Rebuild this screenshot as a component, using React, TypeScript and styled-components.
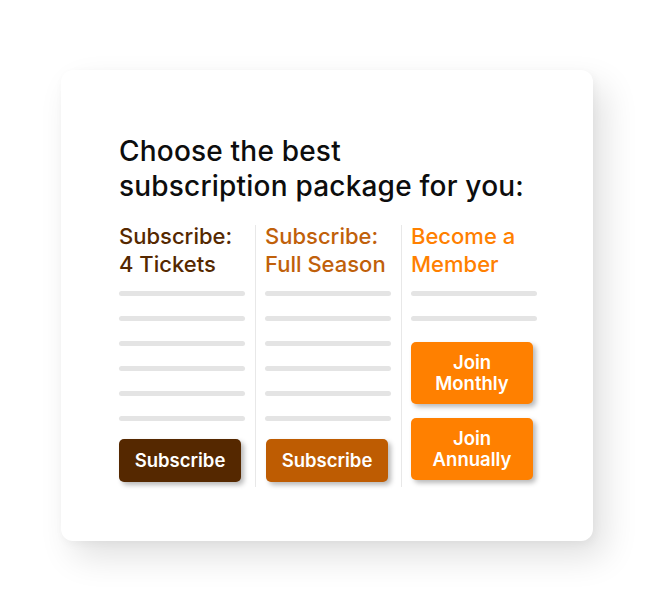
import React from "react";
import styled, { createGlobalStyle } from "styled-components";

const GlobalStyle = createGlobalStyle`
  html, body {
    margin: 0;
    padding: 0;
    background: #ffffff;
  }
  body {
    font-family: Inter, "Noto Sans", sans-serif;
    -webkit-font-smoothing: antialiased;
  }
`;

const Page = styled.div`
  width: 654px;
  height: 612px;
  padding: 70px 0 0 61px;
  box-sizing: border-box;
`;

const Card = styled.div`
  width: 532px;
  height: 471px;
  box-sizing: border-box;
  background: #ffffff;
  border-radius: 12px;
  box-shadow: 12px 16px 34px rgba(0, 0, 0, 0.12), 2px 3px 10px rgba(0, 0, 0, 0.04);
  padding: 64px 0 0 58px;
`;

const Heading = styled.h1`
  margin: 0;
  font-size: 28px;
  line-height: 35px;
  font-weight: 500;
  letter-spacing: 0.2px;
  color: #0d0d0d;
`;

const Columns = styled.div`
  display: flex;
  align-items: flex-start;
  margin-top: 17px;
`;

const Column = styled.div`
  width: 126px;
  display: flex;
  flex-direction: column;
`;

const Divider = styled.div`
  width: 1px;
  background: #e8e8e8;
  margin: 4px 9px 0 10px;
  height: 262px;
`;

const ColumnTitle = styled.h2<{ $color: string }>`
  margin: 1px 0 0;
  font-size: 22px;
  line-height: 28px;
  font-weight: 500;
  color: ${(p) => p.$color};
  white-space: nowrap;
`;

const Bars = styled.div`
  display: flex;
  flex-direction: column;
  gap: 20px;
  margin-top: 13px;
`;

const Bar = styled.div`
  height: 5px;
  border-radius: 3px;
  background: #e4e4e4;
`;

const Buttons = styled.div<{ $offset: number }>`
  display: flex;
  flex-direction: column;
  gap: 14px;
  margin-top: ${(p) => p.$offset}px;
`;

const Button = styled.button<{ $bg: string; $tall?: boolean; $inset?: number }>`
  width: 122px;
  height: ${(p) => (p.$tall ? 62 : 43)}px;
  margin-left: ${(p) => p.$inset ?? 0}px;
  border: none;
  border-radius: 5px;
  background: ${(p) => p.$bg};
  color: #ffffff;
  font-family: Inter, "Noto Sans", sans-serif;
  font-size: 18.5px;
  line-height: 21px;
  font-weight: 600;
  box-shadow: 3px 3px 5px rgba(0, 0, 0, 0.28);
  padding: 0;
  cursor: pointer;
`;

const plans = [
  { title: ["Subscribe:", "4 Tickets"], color: "#552800", bars: 6, bg: "#552800", inset: 0 },
  { title: ["Subscribe:", "Full Season"], color: "#c0600a", bars: 6, bg: "#be5c02", inset: 1 },
];

export default function App() {
  return (
    <>
      <GlobalStyle />
      <Page>
        <Card>
          <Heading>
            Choose the best
            <br />
            subscription package for you:
          </Heading>
          <Columns>
            {plans.map((plan, i) => (
              <React.Fragment key={i}>
                <Column>
                  <ColumnTitle $color={plan.color}>
                    {plan.title[0]}
                    <br />
                    {plan.title[1]}
                  </ColumnTitle>
                  <Bars>
                    {Array.from({ length: plan.bars }).map((_, j) => (
                      <Bar key={j} />
                    ))}
                  </Bars>
                  <Buttons $offset={18}>
                    <Button $bg={plan.bg} $inset={plan.inset}>Subscribe</Button>
                  </Buttons>
                </Column>
                <Divider />
              </React.Fragment>
            ))}
            <Column>
              <ColumnTitle $color="#ff8000">
                Become a
                <br />
                Member
              </ColumnTitle>
              <Bars>
                <Bar />
                <Bar />
              </Bars>
              <Buttons $offset={21}>
                <Button $bg="#ff8000" $tall>
                  Join
                  <br />
                  Monthly
                </Button>
                <Button $bg="#ff8000" $tall>
                  Join
                  <br />
                  Annually
                </Button>
              </Buttons>
            </Column>
          </Columns>
        </Card>
      </Page>
    </>
  );
}
